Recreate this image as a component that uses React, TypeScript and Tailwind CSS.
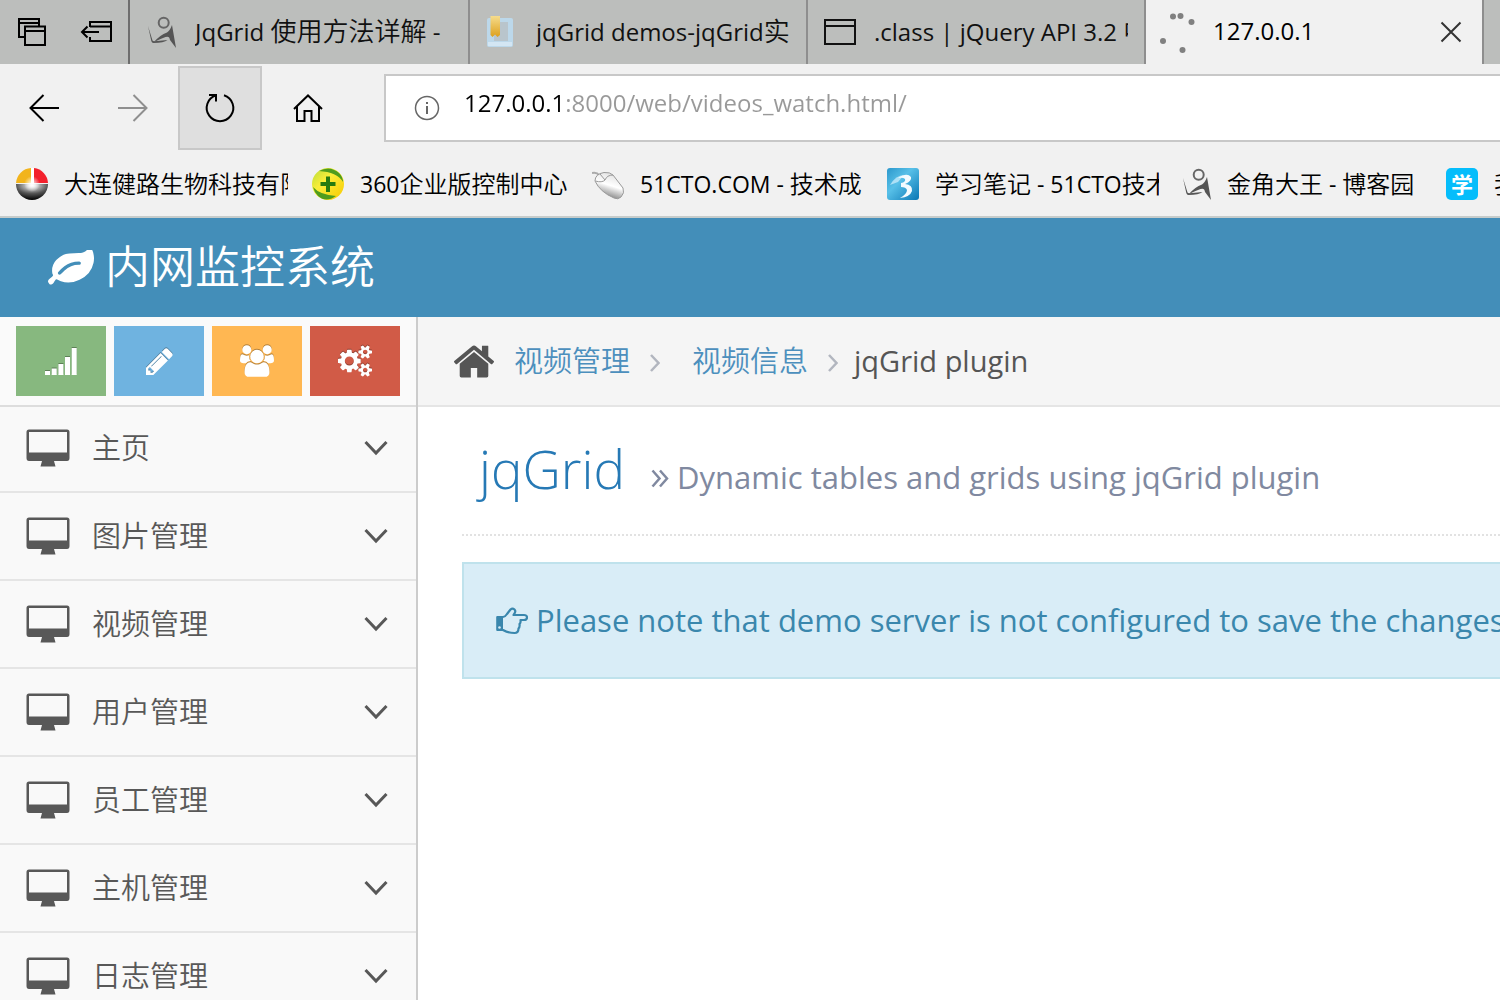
import React from "react";

const UI = "font-['Open_Sans','Noto_Sans_CJK_SC',sans-serif]";

const LEAF =
  "M1280 704q0-26-19-45t-45-19q-172 0-318 49.5t-259.5 134-235.5 219.5q-19 21-19 45 0 26 19 45t45 19q24 0 45-19 27-24 74-71t67-66q137-124 268.5-176t313.5-52q26 0 45-19t19-45zm512-198q0 95-20 193-46 224-184.5 383t-357.5 268q-214 108-438 108-148 0-286-47-15-5-88-42t-96-37q-16 0-39.5 32t-45 70-52.5 70-60 32q-43 0-63.5-17.5t-45.5-59.5q-2-4-6-11t-5.5-10-3-9.5-1.5-13.5q0-35 31-73.5t68-65.5 68-56 31-48q0-4-14-38t-16-44q-9-51-9-104 0-115 43.5-220t119-184.5 170.5-139 204-95.5q55-18 145-25.5t179.5-9 178.5-6 163.5-24 113.5-56.5l29.5-29.5 29.5-28 27-20 36.5-16 43.5-4.5q39 0 70.5 46t47.5 112 24 124 8 96z";
const PENCIL =
  "M491 1536l91-91-235-235-91 91v107h128v128h107zm523-928q0-22-22-22-10 0-17 7l-542 542q-7 7-7 17 0 22 22 22 10 0 17-7l542-542q7-7 7-17zm-54-192l416 416-832 832h-416v-416zm683 96q0 53-37 90l-166 166-416-416 166-165q36-38 90-38 53 0 91 38l235 234q37 39 37 91z";
const USERS =
  "M593 896q-162 5-265 128h-134q-82 0-138-40.5t-56-118.5q0-353 124-353 6 0 43.5 21t97.5 42.5 119 21.5q67 0 133-23-5 37-5 66 0 139 81 256zm1071 637q0 120-73 189.5t-194 69.5h-874q-121 0-194-69.5t-73-189.5q0-53 3.5-103.5t14-109 26.5-108.5 43-97.5 62-81 85.5-53.5 111.5-20q10 0 43 21.5t73 48 107 48 135 21.5 135-21.5 107-48 73-48 43-21.5q61 0 111.5 20t85.5 53.5 62 81 43 97.5 26.5 108.5 14 109 3.5 103.5zm-1024-1277q0 106-75 181t-181 75-181-75-75-181 75-181 181-75 181 75 75 181zm704 384q0 159-112.5 271.5t-271.5 112.5-271.5-112.5-112.5-271.5 112.5-271.5 271.5-112.5 271.5 112.5 112.5 271.5zm576 225q0 78-56 118.5t-138 40.5h-134q-103-123-265-128 81-117 81-256 0-29-5-66 66 23 133 23 59 0 119-21.5t97.5-42.5 43.5-21q124 0 124 353zm-128-609q0 106-75 181t-181 75-181-75-75-181 75-181 181-75 181 75 75 181z";
const COGS =
  "M896 896q0-106-75-181t-181-75-181 75-75 181 75 181 181 75 181-75 75-181zm768 512q0-52-38-90t-90-38-90 38-38 90q0 53 37.5 90.5t90.5 37.5 90.5-37.5 37.5-90.5zm0-1024q0-52-38-90t-90-38-90 38-38 90q0 53 37.5 90.5t90.5 37.5 90.5-37.5 37.5-90.5zm-384 421v185q0 10-7 19.5t-16 10.5l-155 24q-11 35-32 76 34 48 90 115 7 11 7 20 0 12-7 19-23 30-82.5 89.5t-78.5 59.5q-11 0-21-7l-115-90q-37 19-77 31-11 108-23 155-7 24-30 24h-186q-11 0-20-7.5t-10-17.5l-23-153q-34-10-75-31l-118 89q-7 7-20 7-11 0-21-8-144-133-144-160 0-9 7-19 10-14 41-53t47-61q-23-44-35-82l-152-24q-10-1-17-9.5t-7-19.5v-185q0-10 7-19.5t16-10.5l155-24q11-35 32-76-34-48-90-115-7-11-7-20 0-12 7-20 22-30 82-89t79-59q11 0 21 7l115 90q34-18 77-32 11-108 23-154 7-24 30-24h186q11 0 20 7.5t10 17.5l23 153q34 10 75 31l118-89q8-7 20-7 11 0 21 8 144 133 144 160 0 8-7 19-12 16-42 54t-45 60q23 48 34 82l152 23q10 2 17 10.5t7 19.5zm640 533v140q0 16-149 31-12 27-30 52 51 113 51 138 0 4-4 7-122 71-124 71-8 0-46-47t-52-68q-20 2-30 2t-30-2q-14 21-52 68t-46 47q-2 0-124-71-4-3-4-7 0-25 51-138-18-25-30-52-149-15-149-31v-140q0-16 149-31 13-29 30-52-51-113-51-138 0-4 4-7 4-2 35-20t59-34 30-16q8 0 46 46.5t52 67.5q20-2 30-2t30 2q51-71 92-112l6-2q4 0 124 70 4 3 4 7 0 25-51 138 17 23 30 52 149 15 149 31zm0-1024v140q0 16-149 31-12 27-30 52 51 113 51 138 0 4-4 7-122 71-124 71-8 0-46-47t-52-68q-20 2-30 2t-30-2q-14 21-52 68t-46 47q-2 0-124-71-4-3-4-7 0-25 51-138-18-25-30-52-149-15-149-31v-140q0-16 149-31 13-29 30-52-51-113-51-138 0-4 4-7 4-2 35-20t59-34 30-16q8 0 46 46.5t52 67.5q20-2 30-2t30 2q51-71 92-112l6-2q4 0 124 70 4 3 4 7 0 25-51 138 17 23 30 52 149 15 149 31z";
const HOUSE =
  "M1472 992v480q0 26-19 45t-45 19h-384v-384h-256v384h-384q-26 0-45-19t-19-45v-480q0-1 .5-3t.5-3l575-474 575 474q1 2 1 6zm223-69l-62 74q-8 9-21 11h-3q-13 0-21-7l-692-577-692 577q-12 8-24 7-13-2-21-11l-62-74q-8-10-7-23.5t11-21.5l719-599q32-26 76-26t76 26l244 204v-195q0-14 9-23t23-9h192q14 0 23 9t9 23v408l219 182q10 8 11 21.5t-7 23.5z";

/* Chinese runs are set slightly larger than the Latin text beside them. */
function Mixed({ text, han }: { text: string; han: string }) {
  return (
    <>
      {text.split(/([\u4e00-\u9fff]+)/).map((run, i) =>
        i % 2 ? (
          <span key={i} className={han}>
            {run}
          </span>
        ) : (
          run
        ),
      )}
    </>
  );
}

function BlogIcon() {
  return (
    <svg width="28" height="32" viewBox="0 0 28 32" className="shrink-0" fill="#555">
      <circle cx="15.7" cy="6.8" r="5" fill="none" stroke="#666" strokeWidth="2" />
      <path d="M0 10L4.500 24.500Q5 25.500 6.500 25.300L19.500 24Q16 27 5.500 27Q3.800 26.800 3.300 25Z" />
      <path d="M24 9L28 32L22 24Q21.500 19.500 17.500 21Q12 23 6 26Q12 19 19 16.500Q22 14.500 24 9Z" />
    </svg>
  );
}

function BookIcon() {
  return (
    <svg width="28" height="32" viewBox="0 0 28 32" className="shrink-0">
      <defs>
        <linearGradient id="ribbon" x1="0" y1="0" x2="0" y2="1">
          <stop offset="0" stopColor="#f6dc8c" />
          <stop offset="1" stopColor="#dda01c" />
        </linearGradient>
      </defs>
      <rect x="1" y="2" width="26" height="29" rx="2" fill="#bcd8ea" />
      <rect x="8" y="6" width="14" height="19" fill="#b9c5cc" />
      <rect x="2" y="26" width="24" height="4" fill="#d3e6f3" />
      <path d="M4.500 0H14V19L11.500 21L9 18.500L6.500 21L4.500 19Z" fill="url(#ribbon)" />
    </svg>
  );
}

function WindowIcon() {
  return (
    <svg width="32" height="26" viewBox="0 0 32 26" className="shrink-0" fill="none" stroke="#111" strokeWidth="2">
      <path d="M1 1H31V25H1ZM1 7H31" />
    </svg>
  );
}

function Spinner() {
  return (
    <svg width="38" height="42" viewBox="0 0 38 42" className="shrink-0" fill="#808080">
      <circle cx="14" cy="5.500" r="3" />
      <circle cx="21.500" cy="5" r="3" />
      <circle cx="32.500" cy="11" r="3" />
      <circle cx="4" cy="30" r="3" />
      <circle cx="23.500" cy="39" r="3" />
    </svg>
  );
}

function ChinaBall() {
  return (
    <svg width="32" height="32" viewBox="0 0 32 32" className="shrink-0">
      <defs>
        <radialGradient id="dome" cx="0.5" cy="0.1" r="0.9">
          <stop offset="0" stopColor="#fff" />
          <stop offset="0.55" stopColor="#555" />
          <stop offset="1" stopColor="#000" />
        </radialGradient>
        <radialGradient id="glow">
          <stop offset="0" stopColor="#fff" />
          <stop offset="1" stopColor="#fff" stopOpacity="0" />
        </radialGradient>
      </defs>
      <path d="M0 16A16 16 0 0 0 32 16Z" fill="url(#dome)" />
      <path d="M15 0A16 16 0 0 0 0 15H15Z" fill="#f2b41c" />
      <path d="M18 0A16 16 0 0 1 32 15H18Z" fill="#f3202c" />
      <path d="M15 0H18V16H15Z" fill="#fff" />
      <circle cx="16" cy="16" r="8" fill="url(#glow)" />
    </svg>
  );
}

function ShieldBall() {
  return (
    <svg width="32" height="32" viewBox="0 0 32 32" className="shrink-0">
      <defs>
        <linearGradient id="lime" x1="0" y1="0" x2="1" y2="1">
          <stop offset="0" stopColor="#b5dc3a" />
          <stop offset="0.4" stopColor="#fbee3a" />
          <stop offset="1" stopColor="#f7c800" />
        </linearGradient>
      </defs>
      <circle cx="16" cy="16" r="16" fill="url(#lime)" />
      <path d="M7 3Q18 -3 27 5Q31 9 31 14Q25 4 7 3Z" fill="#4f9c1e" />
      <path d="M1 19Q8 27 24 28Q14 35 6 28Q2 24 1 19Z" fill="#4f9c1e" />
      <path d="M14 8.500H18V14H23.500V18H18V24H14V18H8.500V14H14Z" fill="#267a10" />
    </svg>
  );
}

function MouseIcon() {
  return (
    <svg width="32" height="32" viewBox="0 0 32 32" className="shrink-0">
      <defs>
        <linearGradient id="shell" x1="0.7" y1="0.1" x2="0.4" y2="1">
          <stop offset="0" stopColor="#e4e4e4" />
          <stop offset="0.45" stopColor="#fff" />
          <stop offset="1" stopColor="#777" />
        </linearGradient>
      </defs>
      <path d="M0 5Q5 4 7 7" fill="none" stroke="#aaa" strokeWidth="2" />
      <path d="M3 13Q3 6 12 4.500Q18 4 21 7L31 20Q33 25 29 29Q26 32 22 30Q8 24 3 13Z" fill="url(#shell)" stroke="#999" />
      <path d="M3.500 13Q10 15 13 12Q15 7 21 7M8 6L13 12" fill="none" stroke="#999" />
    </svg>
  );
}

function ThreeIcon() {
  return (
    <svg width="32" height="32" viewBox="0 0 32 32" className="shrink-0">
      <defs>
        <linearGradient id="sea" x1="0" y1="0" x2="1" y2="1">
          <stop offset="0" stopColor="#2c98cc" />
          <stop offset="0.4" stopColor="#58c0e8" />
          <stop offset="1" stopColor="#0876b4" />
        </linearGradient>
      </defs>
      <rect width="32" height="32" rx="3" fill="url(#sea)" />
      <path d="M3 17Q9 7 17 7L11 14Z" fill="#c4eafa" opacity="0.8" />
      <path d="M11 10Q20 4 24 9Q25 13 18 16Q26 17 25 23Q23 29 13 30Q20 26 20 22Q19 19 14 19V15Q19 14 18 11Q16 9 11 10Z" fill="#f3fbff" />
    </svg>
  );
}

function StudyIcon() {
  return (
    <span className="flex size-8 shrink-0 items-center justify-center rounded-[5px] bg-[#05bdfb] text-[22px] leading-8 font-bold text-white">
      学
    </span>
  );
}

const tabs = [
  { icon: <BlogIcon />, text: "JqGrid 使用方法详解 -", box: "w-[340px] gap-[19px] pl-[18px]" },
  { icon: <BookIcon />, text: "jqGrid demos-jqGrid实例", box: "w-[338px] gap-[22px] pl-4" },
  { icon: <WindowIcon />, text: ".class | jQuery API 3.2 中文", box: "w-[338px] gap-[18px] pl-4" },
];

const bookmarks = [
  { icon: <ChinaBall />, text: "大连健路生物科技有限公司", width: "w-[224px]" },
  { icon: <ShieldBall />, text: "360企业版控制中心", width: "w-[208px]" },
  { icon: <MouseIcon />, text: "51CTO.COM - 技术成", width: "w-[223px]" },
  { icon: <ThreeIcon />, text: "学习笔记 - 51CTO技术博客", width: "w-[224px]" },
  { icon: <BlogIcon />, text: "金角大王 - 博客园", width: "w-[195px]" },
  { icon: <StudyIcon />, text: "我的学习", width: "w-[224px]" },
];

const menu = ["主页", "图片管理", "视频管理", "用户管理", "员工管理", "主机管理", "日志管理"];

function Glyph({ d, box, width, height }: { d: string; box: string; width: number; height: number }) {
  return (
    <svg width={width} height={height} viewBox={box} fill="currentColor" className="shrink-0">
      <path d={d} />
    </svg>
  );
}

const shortcuts = [
  {
    label: "统计",
    color: "bg-[#87b87f]",
    icon: (
      <svg width="32" height="30" viewBox="0 0 32 30" fill="currentColor">
        <path d="M0 25h5v4h-5zM6.700 22.500h5v6.500h-5zM13.400 18h5v11h-5zM20 11h5v18h-5zM26.700 2h5v27h-5z" />
      </svg>
    ),
  },
  { label: "编辑", color: "bg-[#6fb3e0]", icon: <Glyph d={PENCIL} box="128 128 1536 1536" width={27} height={27} /> },
  { label: "用户", color: "bg-[#ffb752]", icon: <Glyph d={USERS} box="0 0 1920 1792" width={34} height={32} /> },
  { label: "设置", color: "bg-[#d15b47]", icon: <Glyph d={COGS} box="0 0 1920 1792" width={34} height={32} /> },
];

function Desktop() {
  return (
    <svg width="44" height="38" viewBox="0 0 44 38" fill="#585858" className="shrink-0">
      <path
        fillRule="evenodd"
        d="M3 0.500H41Q43.500 0.500 43.500 3V29Q43.500 32 41 32H28L29.500 37.500H14.500L16 32H3Q0.500 32 0.500 29V3Q0.500 0.500 3 0.500ZM3 3V23.500H41V3Z"
      />
    </svg>
  );
}

function Crumb() {
  return (
    <svg width="10" height="18" viewBox="0 0 10 18" fill="none" stroke="#b2b6bf" strokeWidth="2.500" className="mt-1 shrink-0">
      <path d="M1 1L8.500 9L1 17" />
    </svg>
  );
}

function TabStrip() {
  return (
    <div className="flex h-16 overflow-hidden bg-[#bcbebc]">
      <div className="flex w-[130px] shrink-0 items-center gap-[34px] border-r-2 border-[#6e6e6e] pl-[18px]">
        <button aria-label="已保留的标签页" className="shrink-0">
          <svg width="28" height="28" viewBox="0 0 28 28" fill="none" stroke="#000" strokeWidth="2" className="block">
            <path d="M7 19H1V1H21V8M1 5H21M7 8.500H27V27H7ZM7 13H27" />
          </svg>
        </button>
        <button aria-label="保留标签页" className="shrink-0">
          <svg width="32" height="22" viewBox="0 0 32 22" fill="none" stroke="#000" strokeWidth="2" className="block">
            <path d="M10 6V1H31V20H10V16M10 5.500H31M2 11H19M7.500 5.500L2 11L7.500 16.500" />
          </svg>
        </button>
      </div>
      {tabs.map((t) => (
        <button
          key={t.text}
          className={`flex shrink-0 items-center border-r-2 border-[#8e8e8e] pr-4 text-left text-[24px] text-[#111] ${t.box}`}
        >
          {t.icon}
          <span className="min-w-0 flex-1 overflow-hidden whitespace-nowrap pb-0.5 leading-9">
            <Mixed text={t.text} han="text-[26px] font-[350]" />
          </span>
        </button>
      ))}
      <div className="flex w-[338px] shrink-0 items-center border-r-2 border-[#8e8e8e] bg-[#f1f1f1] pr-5 pl-[13px]">
        <Spinner />
        <button className="flex-1 pb-0.5 pl-4 text-left text-[24px]">127.0.0.1</button>
        <button aria-label="关闭标签页">
          <svg width="22" height="22" viewBox="0 0 22 22" stroke="#333" strokeWidth="2" className="block">
            <path d="M1.500 1.500L20.500 20.500M20.500 1.500L1.500 20.500" />
          </svg>
        </button>
      </div>
    </div>
  );
}

function Toolbar() {
  return (
    <div className="flex h-[88px] items-center bg-[#f1f1f1]">
      <button aria-label="后退" className="flex w-[88px] justify-center">
        <svg width="30" height="28" viewBox="0 0 30 28" fill="none" stroke="#000" strokeWidth="2">
          <path d="M30 14H1.500M14.500 1L1.500 14L14.500 27" />
        </svg>
      </button>
      <button aria-label="前进" className="flex w-[90px] justify-center">
        <svg width="30" height="28" viewBox="0 0 30 28" fill="none" stroke="#8f8f8f" strokeWidth="2">
          <path d="M0 14H28.500M15.500 1L28.500 14L15.500 27" />
        </svg>
      </button>
      <button aria-label="刷新" className="flex size-[84px] items-center justify-center border-2 border-[#c8c8c8] bg-[#dfdfdf]">
        <svg width="32" height="32" viewBox="0 0 32 32" fill="none" stroke="#000" strokeWidth="2">
          <path d="M20 3.200A13.300 13.300 0 1 1 12 3.200M5 3H12V9.500" />
        </svg>
      </button>
      <button aria-label="主页" className="flex w-[92px] justify-center">
        <svg width="30" height="28" viewBox="0 0 30 28" fill="none" stroke="#000" strokeWidth="2">
          <path d="M1 15L15 1.500L29 15M4 12.500V27H11.500V17H18.500V27H26V12.500" />
        </svg>
      </button>
      <label className="ml-[30px] flex h-[68px] flex-1 items-center gap-6 border-2 border-r-0 border-[#c8c8c8] bg-white pl-7">
        <svg width="26" height="26" viewBox="0 0 26 26" fill="none" stroke="#666" strokeWidth="1.500" className="shrink-0">
          <circle cx="13" cy="13" r="11.500" />
          <path d="M13 11V19M13 7V9" strokeWidth="2" />
        </svg>
        <input
          type="text"
          aria-label="地址"
          defaultValue="127.0.0.1:8000/web/videos_watch.html/"
          className="mb-2.5 min-w-0 flex-1 bg-[linear-gradient(to_right,#000_102px,#999_102px)] bg-clip-text text-[24px] leading-9 text-transparent outline-none"
        />
      </label>
    </div>
  );
}

function Bookmarks() {
  return (
    <nav className="flex h-[66px] items-center gap-6 overflow-hidden border-b-2 border-[#c6cccb] bg-[#f1f1f1] pl-4">
      {bookmarks.map((b) => (
        <a key={b.text} href="#" className="flex shrink-0 items-center gap-4 text-[23px] text-black">
          {b.icon}
          <span className={`overflow-hidden whitespace-nowrap leading-9 ${b.width}`}>
            <Mixed text={b.text} han="text-[24px] font-[350]" />
          </span>
        </a>
      ))}
    </nav>
  );
}

function Sidebar() {
  return (
    <aside className="w-[418px] shrink-0 border-r-2 border-[#ccc] bg-[#f9f9f9]">
      <div className="flex h-[90px] gap-2 border-b-2 border-[#ddd] bg-[#fafafa] px-4 pt-[9px]">
        {shortcuts.map((s) => (
          <button
            key={s.label}
            aria-label={s.label}
            className={`flex h-[70px] w-[90px] items-center justify-center text-white ${s.color}`}
          >
            <span className="[filter:drop-shadow(0_-1px_0_rgba(0,0,0,0.3))]">{s.icon}</span>
          </button>
        ))}
      </div>
      <ul>
        {menu.map((m) => (
          <li key={m} className="border-b-2 border-[#e5e5e5] first:-mt-0.5">
            <button className="flex h-[86px] w-full items-center pr-7 pl-[26px] text-left text-[29px] text-[#585858]">
              <Desktop />
              <span className="ml-[22px] flex-1 font-[350]">{m}</span>
              <svg width="24" height="16" viewBox="0 0 24 16" fill="none" stroke="#585858" strokeWidth="3">
                <path d="M1.500 2L12 13L22.500 2" />
              </svg>
            </button>
          </li>
        ))}
      </ul>
    </aside>
  );
}

function Content() {
  return (
    <main className="min-w-0 flex-1 bg-white">
      <nav className="flex h-[90px] items-center border-b-2 border-[#e5e5e5] bg-[#f5f5f5] pl-9 text-[29px] text-[#555]">
        <Glyph d={HOUSE} box="90 250 1612 1290" width={40} height={33} />
        <a href="#" className="ml-5 font-[350] text-[#4c8fbd]">
          视频管理
        </a>
        <span className="mr-8 ml-5">
          <Crumb />
        </span>
        <a href="#" className="font-[350] text-[#4c8fbd]">
          视频信息
        </a>
        <span className="mr-4 ml-5">
          <Crumb />
        </span>
        <span>jqGrid plugin</span>
      </nav>
      <div className="pl-11">
        <h1 className="flex h-[129px] items-baseline overflow-hidden whitespace-nowrap border-b-2 border-dotted border-[#e2e2e2] pt-[26px] pl-[17px] text-[53px] leading-[72px] font-light text-[#2679b5]">
          jqGrid
          <small className="ml-[26px] flex items-baseline gap-2 text-[31px] font-normal text-[#8089a0]">
            <svg width="18" height="20" viewBox="0 0 18 20" fill="none" stroke="currentColor" strokeWidth="2.500">
              <path d="M1.500 1.500L8.500 9.500L1.500 17.500M9 1.500L16 9.500L9 17.500" />
            </svg>
            Dynamic tables and grids using jqGrid plugin
          </small>
        </h1>
        <div className="mt-[26px] flex h-[117px] items-center gap-2 overflow-hidden whitespace-nowrap border-2 border-r-0 border-[#bfe2ec] bg-[#d9edf7] pl-8 text-[31px] text-[#3a87ad]">
          <svg width="32" height="28" viewBox="0 0 32 28" fill="none" stroke="currentColor" strokeWidth="2.200" strokeLinejoin="round" className="shrink-0">
            <path d="M0.500 9.500H7V23.500H0.500ZM3 20.500V22" fill="currentColor" stroke="none" />
            <path d="M1.500 10H7Q9 10 11 7L14.500 2.500Q16.500 0.700 18.500 2.500Q20.500 4.500 17.500 8H28Q31 8 31 10.500Q31 13 28 13H24.500Q25 15.500 23.500 17Q24 20 22.500 21.500Q22.500 26 18.500 26Q12 26 7 23H1.500Z" />
            <circle cx="3.500" cy="20.500" r="1.300" fill="#d9edf7" stroke="none" />
          </svg>
          <p>Please note that demo server is not configured to save the changes,</p>
        </div>
      </div>
    </main>
  );
}

export default function App() {
  return (
    <div className={`flex h-screen flex-col overflow-hidden bg-white text-black ${UI}`}>
      <header className="shrink-0">
        <TabStrip />
        <Toolbar />
        <Bookmarks />
      </header>
      <div className="flex h-[99px] shrink-0 items-center bg-[#438eb9] pl-12 text-[45px] text-white">
        <a href="#" className="flex items-center gap-[11px]">
          <Glyph d={LEAF} box="0 200 1792 1380" width={46} height={36} />
          <span className="pb-0.5 leading-[64px] font-[350]">内网监控系统</span>
        </a>
      </div>
      <div className="flex min-h-0 flex-1">
        <Sidebar />
        <Content />
      </div>
    </div>
  );
}
